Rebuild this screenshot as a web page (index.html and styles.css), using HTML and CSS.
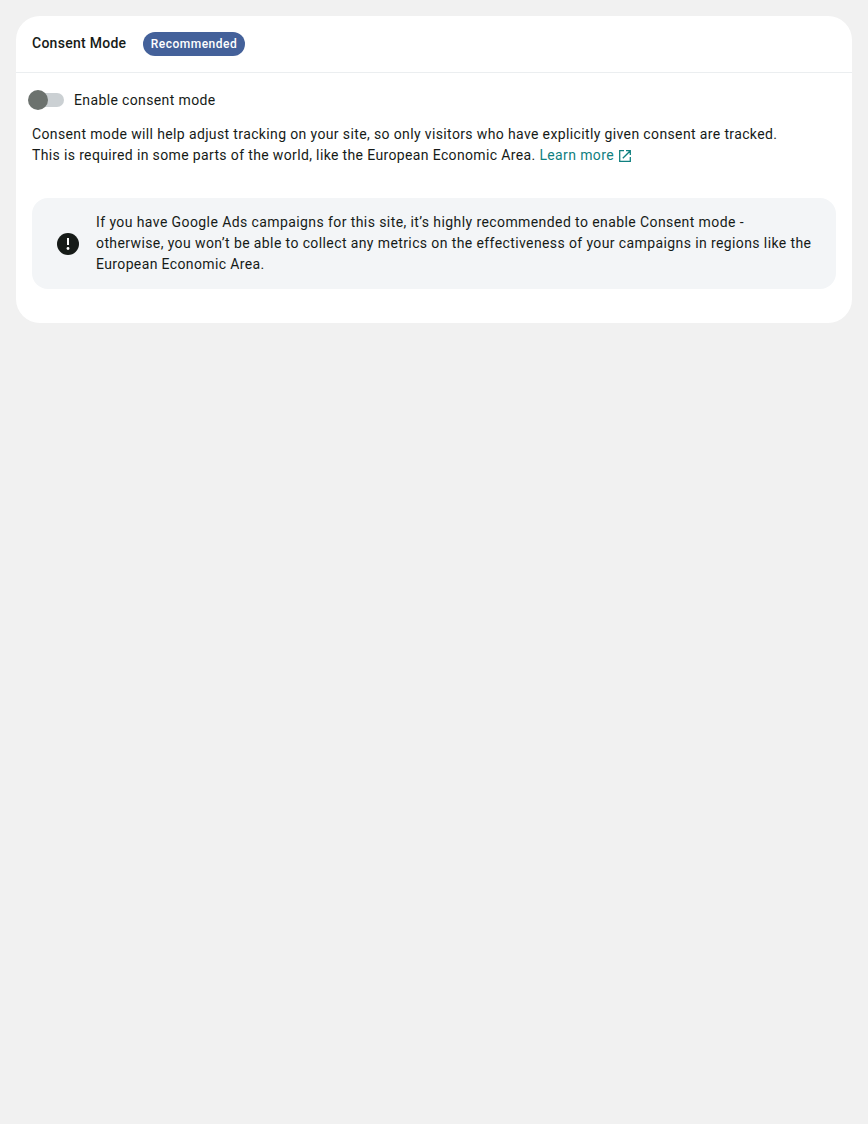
FILE: index.html
```html
<!DOCTYPE html>
<html lang="en">
<head>
<meta charset="utf-8">
<title>Consent Mode</title>
<link rel="stylesheet" href="styles.css">
</head>
<body>
<main class="card">
  <header class="card-header">
    <h1 class="title">Consent Mode</h1>
    <span class="badge">Recommended</span>
  </header>
  <section class="content">
    <label class="switch-row">
      <span class="switch"><span class="thumb"></span></span>
      <span class="switch-label">Enable consent mode</span>
    </label>
    <p class="description"><span class="d1">Consent mode will help adjust tracking on your site, so only visitors who have explicitly given consent are tracked.</span><br><span class="d2">This is required in some parts of the world, like the European Economic Area.</span> <a class="link">Learn more<svg class="external" viewBox="0 0 12 12"><path d="M5 .7H.7v10.6h10.6V7M7 .7h4.3V5M11.3.7 3.8 8.2" fill="none" stroke="currentColor" stroke-width="1.3"/></svg></a></p>
    <div class="notice">
      <svg class="alert" viewBox="0 0 22 22"><circle cx="11" cy="11" r="11" fill="#161b18"/><path d="M10 5h2v7h-2z" fill="#fff"/><circle cx="11" cy="15.5" r="1.4" fill="#fff"/></svg>
      <p class="notice-text"><span class="n1">If you have Google Ads campaigns for this site, it’s highly recommended to enable Consent mode -</span><br><span class="n2">otherwise, you won’t be able to collect any metrics on the effectiveness of your campaigns in regions like the</span><br><span class="n3">European Economic Area.</span></p>
    </div>
  </section>
</main>
</body>
</html>
```
FILE: styles.css
```css
* { box-sizing: border-box; }
body {
  margin: 0;
  padding: 16px;
  background: #f1f1f1;
  color: #161b18;
  font: 400 14px/21px Roboto, sans-serif;
  letter-spacing: 0.37px;
  white-space: nowrap;
}
p, h1 { margin: 0; }
.card { height: 307px; background: #fff; border-radius: 24px; }
.card-header {
  display: flex;
  align-items: center;
  gap: 16px;
  height: 57px;
  padding: 0 16px 1px;
  border-bottom: 1px solid #ebeef0;
}
.title {
  width: 95px;
  padding-bottom: 2px;
  font-size: 14px;
  font-weight: 500;
  line-height: 20px;
  letter-spacing: 0.27px;
}
.badge {
  width: 102px;
  height: 24px;
  border-radius: 12px;
  background: #44619a;
  color: #fff;
  font-size: 12px;
  font-weight: 500;
  line-height: 24px;
  text-align: center;
  letter-spacing: 0.5px;
}
.content { padding: 17px 16px 0; }
.switch-row { display: flex; align-items: center; height: 20px; margin-left: -4px; }
.switch {
  display: flex;
  align-items: center;
  width: 36px;
  height: 14px;
  border-radius: 7px;
  background: linear-gradient(90deg, transparent 10px, #cbd0d3 10px);
}
.thumb { width: 20px; height: 20px; border-radius: 50%; background: #6c726e; flex: none; }
.switch-label { margin-left: 10px; }
.description { margin-top: 14px; }
.d2 { letter-spacing: 0.36px; }
.link { color: #108080; }
.external { width: 12px; height: 12px; margin-left: 5px; vertical-align: -2px; }
.notice {
  display: flex;
  align-items: center;
  height: 91px;
  margin-top: 32px;
  padding-left: 25px;
  border-radius: 16px;
  background: #f3f5f7;
}
.alert { width: 22px; height: 22px; margin-right: 17px; }
.n1 { letter-spacing: 0.412px; }
.n2 { letter-spacing: 0.394px; }
```
